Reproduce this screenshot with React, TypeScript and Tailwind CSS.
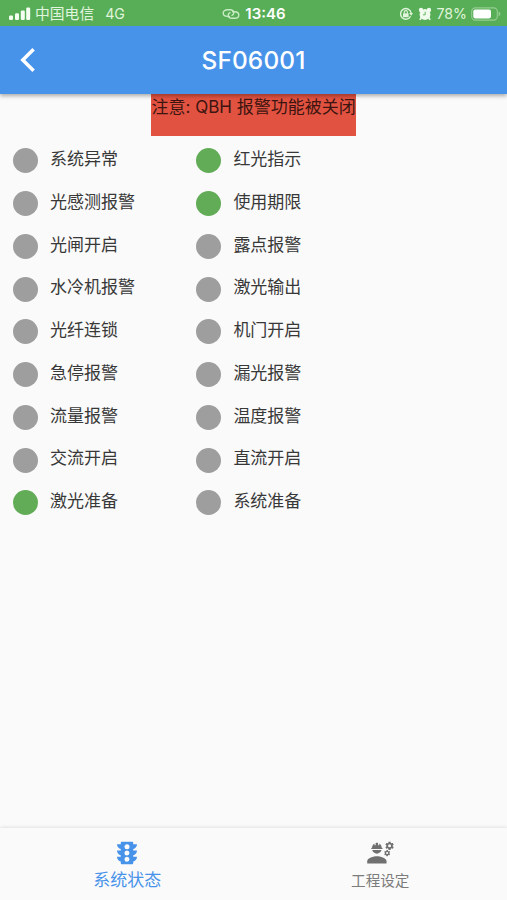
import { MdTraffic, MdEngineering } from "react-icons/md";

const rows: [string, boolean, string, boolean][] = [
  ["系统异常", false, "红光指示", true],
  ["光感测报警", false, "使用期限", true],
  ["光闸开启", false, "露点报警", false],
  ["水冷机报警", false, "激光输出", false],
  ["光纤连锁", false, "机门开启", false],
  ["急停报警", false, "漏光报警", false],
  ["流量报警", false, "温度报警", false],
  ["交流开启", false, "直流开启", false],
  ["激光准备", true, "系统准备", false],
];

function Lamp({ label, on }: { label: string; on: boolean }) {
  return (
    <div className="flex h-[42.75px] w-[183.4px] items-start">
      <span className={`size-[25px] shrink-0 rounded-full ${on ? "bg-[#62ac58]" : "bg-[#9e9e9e]"}`} />
      <span className="-mt-[1.3px] ml-[12.2px] text-[17px] leading-[24px] whitespace-nowrap text-[#383838]">{label}</span>
    </div>
  );
}

function StatusBar() {
  return (
    <div className="flex h-[25.5px] items-center justify-between bg-[#58ad57] pt-[2px] pr-[6px] pl-[9px] text-[#e0f5dc]">
      <div className="flex w-[210px] items-center">
        <svg width="22" height="14" viewBox="0 0 22 14" fill="#f4fff2">
          <rect x="0" y="8.5" width="4" height="4.5" rx="1.2" />
          <rect x="6" y="6.2" width="4" height="6.8" rx="1.2" />
          <rect x="11.8" y="3.4" width="4" height="9.6" rx="1.2" />
          <rect x="17.2" y="0.5" width="4" height="12.5" rx="1.2" />
        </svg>
        <span className="ml-[4px] text-[14.8px] leading-[22px]">中国电信</span>
        <span className="ml-[11px] text-[14.2px] leading-[22px]">4G</span>
      </div>
      <div className="flex items-center gap-[5px]">
        <svg width="18" height="12" viewBox="0 0 18 12" fill="none" stroke="#c9ecc5" strokeWidth="1.4" strokeLinecap="round">
          <path d="M7.4 8.4H5.4C3 8.4 1.2 7 1.2 5.1S3 1.8 5.4 1.8h2.4c2.4 0 4 1.4 4 3.1 0 1.1-.7 2-1.8 2.5" />
          <path d="M10.6 3.7h2c2.4 0 4.2 1.4 4.2 3.3s-1.8 3.3-4.2 3.3h-2.4c-2.4 0-4-1.4-4-3.1 0-1.1.7-2 1.8-2.5" />
        </svg>
        <span className="text-[15px] leading-[22px] font-semibold text-white">13:46</span>
      </div>
      <div className="flex w-[212px] items-center justify-end">
        <svg width="14" height="14" viewBox="0 0 14 14" fill="none" stroke="#e0f5dc" strokeWidth="1.4">
          <path d="M11.6 9.3A5.3 5.3 0 1 1 12.1 6" />
          <path d="M10.2 6.1h3.8l-1.8 2.6z" fill="#e0f5dc" stroke="none" />
          <rect x="4" y="6.2" width="5.6" height="4" rx=".5" fill="#e0f5dc" stroke="none" />
          <path d="M5.2 6.5V5.3c0-2.2 3.2-2.2 3.2 0v1.2" strokeWidth="1.1" />
        </svg>
        <svg className="ml-[5px]" width="14" height="14" viewBox="0 0 14 14" fill="#effbed">
          <circle cx="7" cy="7.5" r="5.4" />
          <circle cx="3" cy="3" r="2.2" />
          <circle cx="11" cy="3" r="2.2" />
          <path d="M3.2 10.5 2 12.8M10.8 10.5l1.2 2.3" stroke="#effbed" strokeWidth="1.7" />
          <path d="M7.2 4.7v3.1H5" fill="none" stroke="#58ad57" strokeWidth=".9" />
        </svg>
        <span className="ml-[4.5px] text-[14.2px] leading-[22px]">78%</span>
        <svg className="ml-[4px] -mr-[1px]" width="31" height="14" viewBox="0 0 31 14">
          <rect x=".7" y=".9" width="25.6" height="12.2" rx="3.6" fill="none" stroke="#96cd92" strokeWidth="1.1" />
          <rect x="2.3" y="2.6" width="17.7" height="8.8" rx="1.8" fill="#fff" />
          <path d="M27.6 4.6c2.4 1.2 2.4 3.6 0 4.8z" fill="#96cd92" />
        </svg>
      </div>
    </div>
  );
}

export default function App() {
  return (
    <div className="flex h-[900px] w-[507px] flex-col overflow-hidden bg-[#fafafa] font-['Inter','Noto_Sans_CJK_SC',sans-serif]">
      <header className="relative z-10 shadow-[0_2px_4px_rgba(0,0,0,0.32)]">
        <StatusBar />
        <div className="grid h-[68.3px] grid-cols-[60px_1fr_60px] items-center bg-[#4893ea] text-white">
          <svg className="ml-[20px]" width="17" height="26" viewBox="0 0 17 26" fill="none" stroke="#fff" strokeWidth="3.5">
            <path d="M13.6 2.2 2.8 13l10.8 10.8" />
          </svg>
          <h1 className="pt-px text-center text-[24.4px] leading-[30px] font-medium tracking-[0.15px]">SF06001</h1>
        </div>
      </header>

      <main className="flex flex-1 flex-col">
        <div className="mx-auto h-[42.7px] w-[205px] bg-[#e25241] pt-px pl-[0.5px] text-[17px] leading-[25px] whitespace-nowrap text-[#3d1510]">
          注意: QBH 报警功能被关闭
        </div>
        <div className="mt-[12px] pl-[12.8px]">
          {rows.map(([left, leftOn, right, rightOn]) => (
            <div key={left} className="flex">
              <Lamp label={left} on={leftOn} />
              <Lamp label={right} on={rightOn} />
            </div>
          ))}
        </div>
      </main>

      <nav className="grid h-[72px] grid-cols-2 bg-[#fafafa] shadow-[0_-1px_3px_rgba(0,0,0,0.1)]">
        <div className="flex flex-col items-center pt-[10px] pl-[1px] text-[#4893ea]">
          <MdTraffic size={30} />
          <span className="text-[17px] leading-[24px]">系统状态</span>
        </div>
        <div className="flex flex-col items-center pt-[10px] text-[#707070]">
          <MdEngineering size={29} />
          <span className="mt-[2px] text-[14.6px] leading-[24px] text-[#7c7c7c]">工程设定</span>
        </div>
      </nav>
    </div>
  );
}
